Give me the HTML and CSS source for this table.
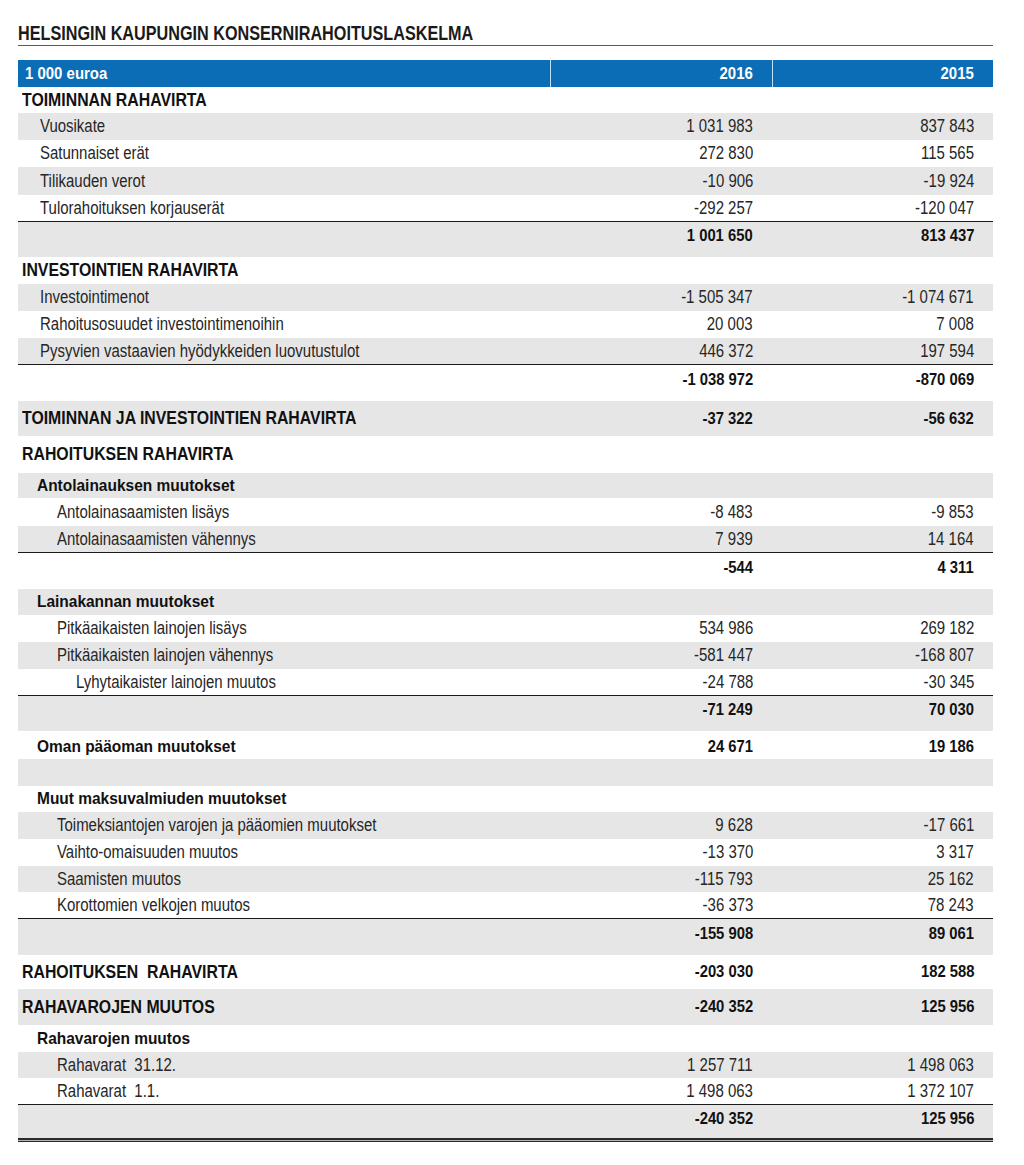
FILE: index.html
```html
<!DOCTYPE html>
<html lang="fi">
<head>
<meta charset="utf-8">
<title>Helsingin kaupungin konsernirahoituslaskelma</title>
<link rel="stylesheet" href="styles.css">
</head>
<body>
<div class="sheet">
  <h1 class="title"><span class="t">HELSINGIN KAUPUNGIN KONSERNIRAHOITUSLASKELMA</span></h1>
  <div class="tbl">
    <div class="row head"><div class="c lbl"><span class="t">1 000 euroa</span></div><div class="c num"><span class="t">2016</span></div><div class="c num"><span class="t">2015</span></div></div>

    <div class="row sec h26"><div class="c lbl"><span class="t">TOIMINNAN RAHAVIRTA</span></div><div class="c num"></div><div class="c num"></div></div>
    <div class="row g"><div class="c lbl i1"><span class="t">Vuosikate</span></div><div class="c num"><span class="t">1 031 983</span></div><div class="c num"><span class="t">837 843</span></div></div>
    <div class="row"><div class="c lbl i1"><span class="t">Satunnaiset erät</span></div><div class="c num"><span class="t">272 830</span></div><div class="c num"><span class="t">115 565</span></div></div>
    <div class="row g h28"><div class="c lbl i1"><span class="t">Tilikauden verot</span></div><div class="c num"><span class="t">-10 906</span></div><div class="c num"><span class="t">-19 924</span></div></div>
    <div class="row ln"><div class="c lbl i1"><span class="t">Tulorahoituksen korjauserät</span></div><div class="c num"><span class="t">-292 257</span></div><div class="c num"><span class="t">-120 047</span></div></div>
    <div class="row tot g"><div class="c lbl"></div><div class="c num"><span class="t">1 001 650</span></div><div class="c num"><span class="t">813 437</span></div></div>

    <div class="row sec"><div class="c lbl"><span class="t">INVESTOINTIEN RAHAVIRTA</span></div><div class="c num"></div><div class="c num"></div></div>
    <div class="row g"><div class="c lbl i1"><span class="t">Investointimenot</span></div><div class="c num"><span class="t">-1 505 347</span></div><div class="c num"><span class="t">-1 074 671</span></div></div>
    <div class="row"><div class="c lbl i1"><span class="t">Rahoitusosuudet investointimenoihin</span></div><div class="c num"><span class="t">20 003</span></div><div class="c num"><span class="t">7 008</span></div></div>
    <div class="row g ln"><div class="c lbl i1"><span class="t">Pysyvien vastaavien hyödykkeiden luovutustulot</span></div><div class="c num"><span class="t">446 372</span></div><div class="c num"><span class="t">197 594</span></div></div>
    <div class="row tot h36"><div class="c lbl"></div><div class="c num"><span class="t">-1 038 972</span></div><div class="c num"><span class="t">-870 069</span></div></div>

    <div class="row sec major g"><div class="c lbl"><span class="t">TOIMINNAN JA INVESTOINTIEN RAHAVIRTA</span></div><div class="c num"><span class="t">-37 322</span></div><div class="c num"><span class="t">-56 632</span></div></div>
    <div class="row sec major h37"><div class="c lbl"><span class="t">RAHOITUKSEN RAHAVIRTA</span></div><div class="c num"></div><div class="c num"></div></div>

    <div class="row sub g h25"><div class="c lbl i1s"><span class="t">Antolainauksen muutokset</span></div><div class="c num"></div><div class="c num"></div></div>
    <div class="row h28"><div class="c lbl i2"><span class="t">Antolainasaamisten lisäys</span></div><div class="c num"><span class="t">-8 483</span></div><div class="c num"><span class="t">-9 853</span></div></div>
    <div class="row g ln"><div class="c lbl i2"><span class="t">Antolainasaamisten vähennys</span></div><div class="c num"><span class="t">7 939</span></div><div class="c num"><span class="t">14 164</span></div></div>
    <div class="row tot h36"><div class="c lbl"></div><div class="c num"><span class="t">-544</span></div><div class="c num"><span class="t">4 311</span></div></div>

    <div class="row sub g h26"><div class="c lbl i1s"><span class="t">Lainakannan muutokset</span></div><div class="c num"></div><div class="c num"></div></div>
    <div class="row"><div class="c lbl i2"><span class="t">Pitkäaikaisten lainojen lisäys</span></div><div class="c num"><span class="t">534 986</span></div><div class="c num"><span class="t">269 182</span></div></div>
    <div class="row g"><div class="c lbl i2"><span class="t">Pitkäaikaisten lainojen vähennys</span></div><div class="c num"><span class="t">-581 447</span></div><div class="c num"><span class="t">-168 807</span></div></div>
    <div class="row ln"><div class="c lbl i3"><span class="t">Lyhytaikaister lainojen muutos</span></div><div class="c num"><span class="t">-24 788</span></div><div class="c num"><span class="t">-30 345</span></div></div>
    <div class="row tot g"><div class="c lbl"></div><div class="c num"><span class="t">-71 249</span></div><div class="c num"><span class="t">70 030</span></div></div>

    <div class="row sub h28 low"><div class="c lbl i1s"><span class="t">Oman pääoman muutokset</span></div><div class="c num"><span class="t">24 671</span></div><div class="c num"><span class="t">19 186</span></div></div>
    <div class="row g"><div class="c lbl"></div><div class="c num"></div><div class="c num"></div></div>

    <div class="row sub h26"><div class="c lbl i1s"><span class="t">Muut maksuvalmiuden muutokset</span></div><div class="c num"></div><div class="c num"></div></div>
    <div class="row g"><div class="c lbl i2"><span class="t">Toimeksiantojen varojen ja pääomien muutokset</span></div><div class="c num"><span class="t">9 628</span></div><div class="c num"><span class="t">-17 661</span></div></div>
    <div class="row"><div class="c lbl i2"><span class="t">Vaihto-omaisuuden muutos</span></div><div class="c num"><span class="t">-13 370</span></div><div class="c num"><span class="t">3 317</span></div></div>
    <div class="row g h26"><div class="c lbl i2"><span class="t">Saamisten muutos</span></div><div class="c num"><span class="t">-115 793</span></div><div class="c num"><span class="t">25 162</span></div></div>
    <div class="row ln"><div class="c lbl i2"><span class="t">Korottomien velkojen muutos</span></div><div class="c num"><span class="t">-36 373</span></div><div class="c num"><span class="t">78 243</span></div></div>
    <div class="row tot g h36"><div class="c lbl"></div><div class="c num"><span class="t">-155 908</span></div><div class="c num"><span class="t">89 061</span></div></div>

    <div class="row sec major h34"><div class="c lbl"><span class="t">RAHOITUKSEN&nbsp; RAHAVIRTA</span></div><div class="c num"><span class="t">-203 030</span></div><div class="c num"><span class="t">182 588</span></div></div>
    <div class="row sec major g h36"><div class="c lbl"><span class="t">RAHAVAROJEN MUUTOS</span></div><div class="c num"><span class="t">-240 352</span></div><div class="c num"><span class="t">125 956</span></div></div>

    <div class="row sub"><div class="c lbl i1s"><span class="t">Rahavarojen muutos</span></div><div class="c num"></div><div class="c num"></div></div>
    <div class="row g h26"><div class="c lbl i2"><span class="t">Rahavarat&nbsp; 31.12.</span></div><div class="c num"><span class="t">1 257 711</span></div><div class="c num"><span class="t">1 498 063</span></div></div>
    <div class="row ln"><div class="c lbl i2"><span class="t">Rahavarat&nbsp; 1.1.</span></div><div class="c num"><span class="t">1 498 063</span></div><div class="c num"><span class="t">1 372 107</span></div></div>
    <div class="row tot g end"><div class="c lbl"></div><div class="c num"><span class="t">-240 352</span></div><div class="c num"><span class="t">125 956</span></div></div>
    <div class="rule"></div>
  </div>
</div>
</body>
</html>
```

FILE: styles.css
```css
html, body {
  margin: 0;
  padding: 0;
  background: #ffffff;
}

body {
  font-family: "Liberation Sans", Arial, sans-serif;
  color: #262626;
}

.t {
  display: inline-block;
  white-space: nowrap;
  transform: scaleX(var(--sx, 0.86));
  transform-origin: left center;
}

.sheet {
  width: 975px;
  margin: 0 0 0 18px;
  padding-top: 21px;
}

.title {
  margin: 0;
  font-size: 20.5px;
  line-height: 24px;
  font-weight: 700;
  color: #1a1a1a;
  border-bottom: 1px solid #5a5a5a;
  --sx: 0.79;
}

.tbl {
  margin-top: 14px;
}

.row {
  display: grid;
  grid-template-columns: 532px 222px 221px;
  height: 27px;
  box-sizing: border-box;
  font-size: 17.5px;
  --sx: 0.855;
}

.c {
  display: flex;
  align-items: center;
  white-space: nowrap;
  min-width: 0;
}

.num {
  justify-content: flex-end;
  padding-right: 19px;
}

.num .t {
  transform-origin: right center;
}

.lbl {
  padding-left: 4px;
}

.g {
  background: #e6e6e6;
}

.head {
  background: #0b6db5;
  color: #ffffff;
  font-weight: 700;
  height: 27px;
  font-size: 17px;
  --sx: 0.88;
}

.head .lbl {
  padding-left: 7px;
}

.head .num {
  border-left: 1px solid #bfe0f5;
}

.sec .lbl {
  font-weight: 700;
  font-size: 18px;
  color: #111111;
  --sx: 0.88;
}

.sub .lbl {
  font-weight: 700;
  font-size: 17px;
  color: #111111;
  --sx: 0.91;
}

.sub .num, .major .num, .tot .num {
  font-weight: 700;
  font-size: 17px;
  color: #111111;
  --sx: 0.87;
}

.i1 { padding-left: 22px; }
.i1s { padding-left: 19px; }
.i2 { padding-left: 39px; }
.i3 { padding-left: 58px; }

.ln {
  border-bottom: 1px solid #1a1a1a;
}

.tot {
  height: 35px;
  padding-bottom: 7px;
}

.major {
  height: 35px;
}

.low .c {
  padding-top: 3px;
}

.h25 { height: 25px; }
.h26 { height: 26px; }
.h28 { height: 28px; }
.h34 { height: 34px; }
.h36 { height: 36px; }
.h37 { height: 37px; }

.end {
  height: 33px;
  padding-bottom: 5px;
}

.rule {
  height: 1px;
  border-top: 2px solid #2a2a2a;
  border-bottom: 1px solid #2a2a2a;
  background: #b5b5b5;
}
```
